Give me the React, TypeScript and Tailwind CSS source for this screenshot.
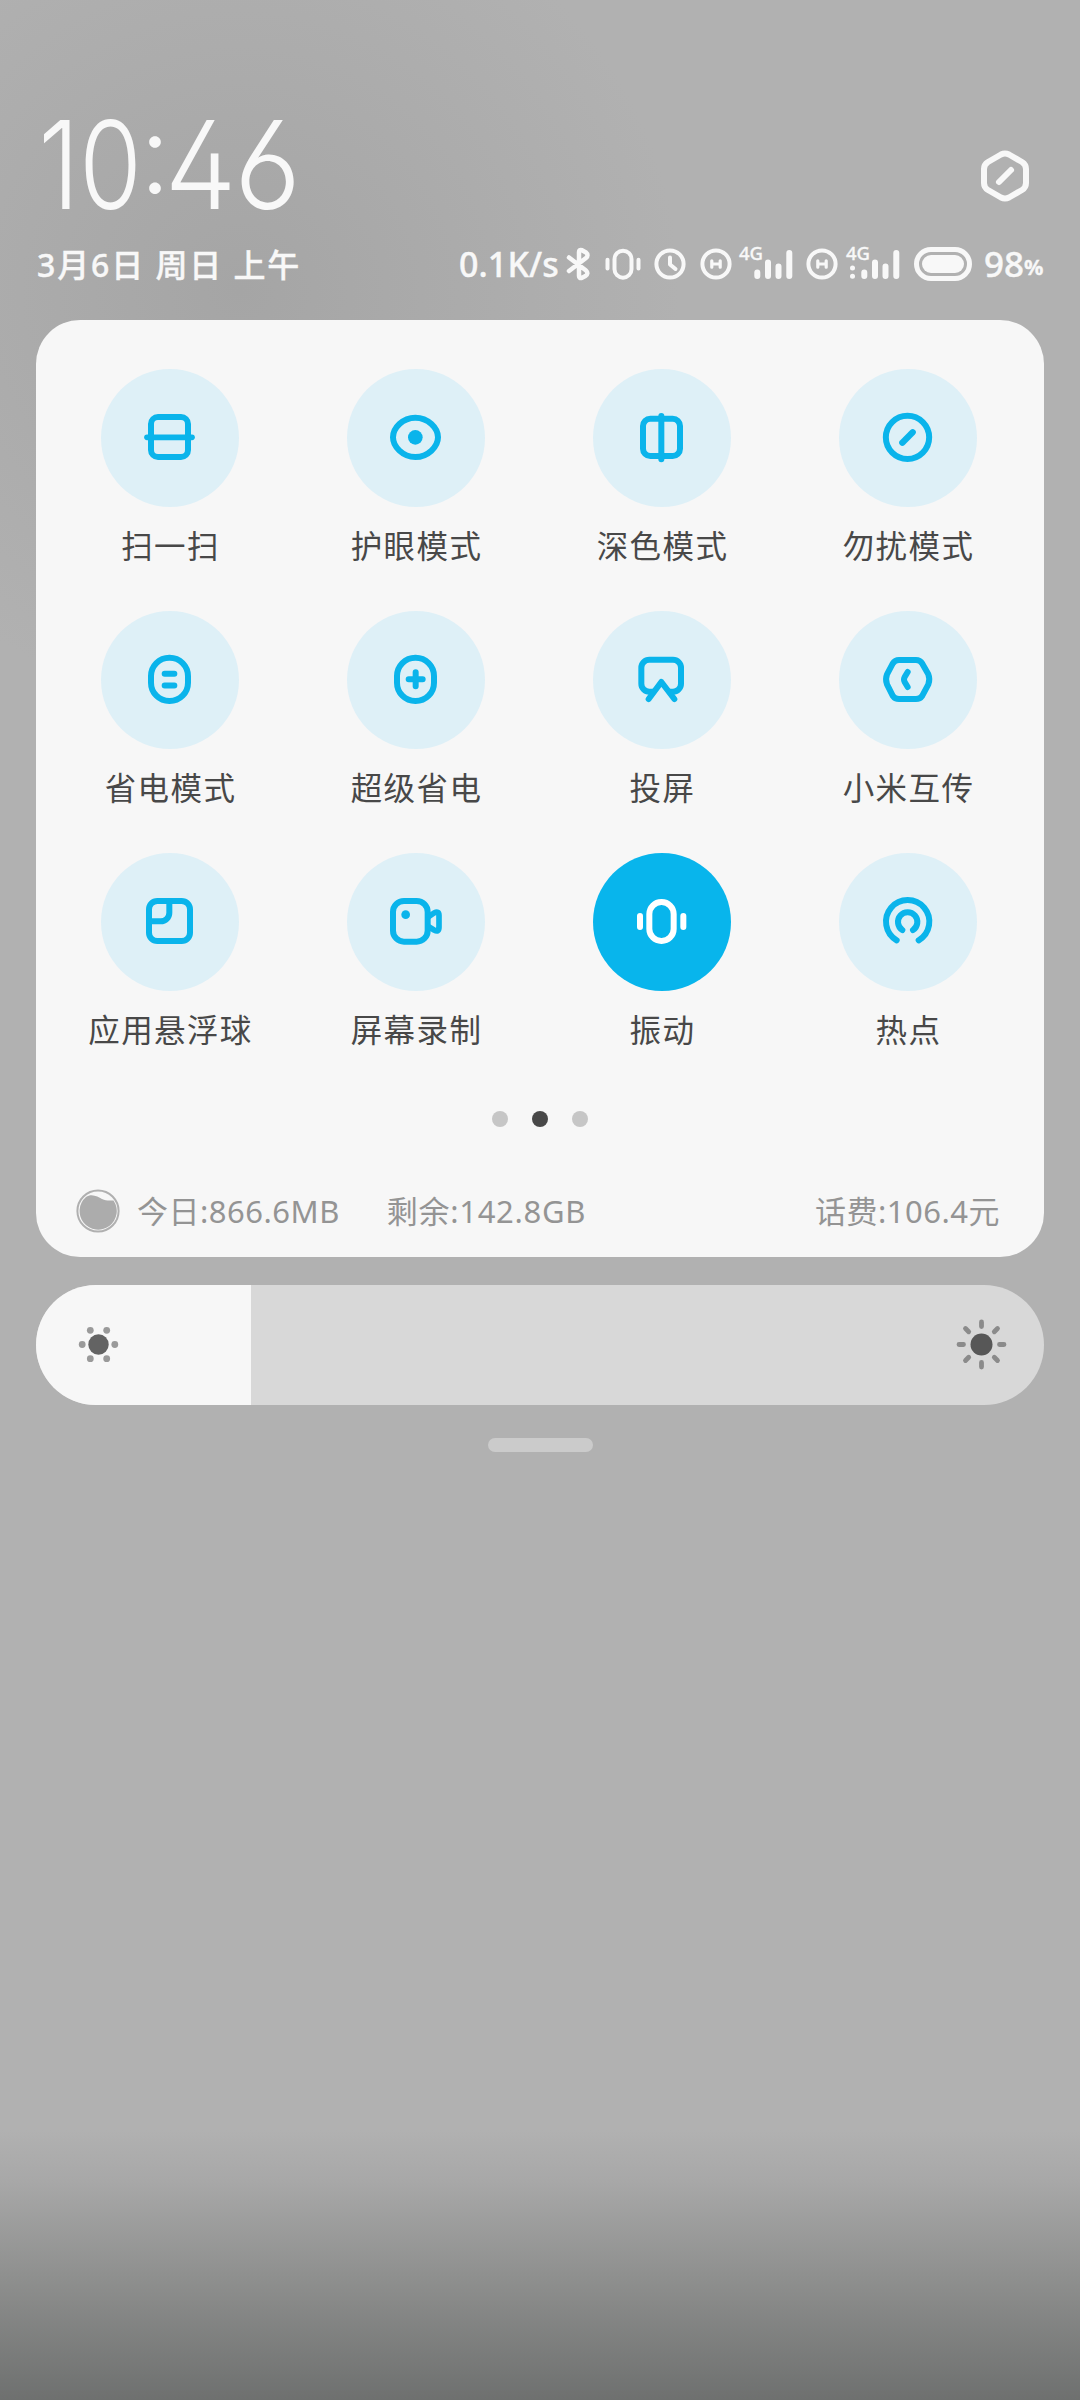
import type { ReactNode } from "react";

type Tile = { label: string; icon: ReactNode; active?: boolean };

const tiles: Tile[] = [
  {
    label: "扫一扫",
    icon: (
      <>
        <rect x="-57" y="-63" width="111" height="120" rx="21" />
        <path d="M-69 -2H66" strokeWidth="17" />
      </>
    ),
  },
  {
    label: "护眼模式",
    icon: (
      <>
        <path d="M-69 -2C-69 -30 -40 -61 -2 -61S66 -30 66 -2S36 57 -2 57S-69 26 -69 -2Z" />
        <circle cx="-2" cy="-2" r="22" fill="currentColor" stroke="none" />
      </>
    ),
  },
  {
    label: "深色模式",
    icon: (
      <>
        <rect x="-57" y="-58" width="111" height="112" rx="22" />
        <path d="M-2 -66V64" />
      </>
    ),
  },
  {
    label: "勿扰模式",
    icon: (
      <>
        <circle cx="-1.5" cy="-2" r="65" />
        <path d="M-17 14L14 -17" strokeWidth="19" />
      </>
    ),
  },
  {
    label: "省电模式",
    icon: (
      <>
        <rect x="-57" y="-67" width="111" height="130" rx="55" />
        <path d="M-16 -19H13M-16 16.5H13" />
      </>
    ),
  },
  {
    label: "超级省电",
    icon: (
      <>
        <rect x="-57" y="-67" width="111" height="130" rx="55" />
        <path d="M-22 -2H20M-1 -23V19" />
      </>
    ),
  },
  {
    label: "投屏",
    icon: (
      <>
        <path d="M-27 35H-38a24 24 0 0 1 -24 -24V-37a24 24 0 0 1 24 -24H33a24 24 0 0 1 24 24V11a24 24 0 0 1 -24 24H24" />
        <path d="M-40 57L-2 6L37 57" />
      </>
    ),
  },
  {
    label: "小米互传",
    icon: (
      <>
        <path d="M-27 -60H24Q36 -60 43 -49L61 -17Q67 -2 61 13L43 47Q36 57 24 57H-27Q-39 57 -46 47L-63 13Q-69 -2 -63 -17L-46 -49Q-39 -60 -27 -60Z" />
        <path d="M-1 -24L-10 -9Q-14 -2 -10 6L-1 21" />
      </>
    ),
  },
  {
    label: "应用悬浮球",
    icon: (
      <>
        <rect x="-63" y="-63" width="123" height="120" rx="25" />
        <path d="M-2 -63V-28a26 26 0 0 1 -26 26H-63" />
      </>
    ),
  },
  {
    label: "屏幕录制",
    icon: (
      <>
        <rect x="-69" y="-63" width="104" height="122" rx="33" />
        <circle cx="-31" cy="-22" r="13" fill="currentColor" stroke="none" />
        <path d="M38 -16L54 -27Q69 -35 69 -20V16Q69 32 54 24L38 14" strokeWidth="17" />
      </>
    ),
  },
  {
    label: "振动",
    active: true,
    icon: (
      <>
        <rect x="-38" y="-60" width="73" height="117" rx="36" />
        <path d="M-66 -18V15M64 -18V15" />
      </>
    ),
  },
  {
    label: "热点",
    icon: (
      <>
        <path d="M-34 55A65 65 0 1 1 32 55" />
        <path d="M-17 24A29 29 0 1 1 15 24" />
      </>
    ),
  },
];

function QuickTile({ label, icon, active }: Tile) {
  return (
    <div className="flex flex-col items-center">
      <div
        className={
          active
            ? "size-[138px] rounded-full bg-[#08b5ec] text-white"
            : "size-[138px] rounded-full bg-[#def0f7] text-[#0ab4eb]"
        }
      >
        <svg
          viewBox="-207 -207 414 414"
          className="size-full"
          fill="none"
          stroke="currentColor"
          strokeWidth="18"
          strokeLinecap="round"
          strokeLinejoin="round"
        >
          {icon}
        </svg>
      </div>
      <div className="mt-[16px] h-[46px] pl-[1px] text-[31.5px] leading-[46px] tracking-[1.4px] whitespace-nowrap text-[#484848]">
        {label}
      </div>
    </div>
  );
}

function HdBadge() {
  return (
    <svg viewBox="-16 -16 32 32" className="size-[32px]" fill="none" stroke="#f8f8f8" strokeWidth="4" strokeLinecap="round">
      <circle r="13.6" />
      <path d="M-4.2 -3.2V3.2M4.2 -3.2V3.2M-4.2 0H4.2" strokeWidth="3.2" />
    </svg>
  );
}

function Signal({ dots }: { dots?: boolean }) {
  return (
    <div className="relative h-[34px] w-[53px]">
      <span className="absolute -top-[3px] -left-[1px] text-[18.5px] leading-[17px] font-medium [-webkit-text-stroke:0.3px]">4G</span>
      <svg viewBox="0 0 53 34" className="size-full" fill="none" stroke="#f8f8f8" strokeWidth="6" strokeLinecap="round">
        <path d="M17.3 25.5V29M28 15.5V29M38.5 19.5V29M49.3 6V29" />
        {dots && <path d="M5.5 20.9h.01M5.5 29.3h.01" strokeWidth="5" />}
      </svg>
    </div>
  );
}

function StatusIcons() {
  return (
    <div className="flex h-[34px] items-center text-[#f8f8f8]">
      <span className="w-[107px] text-[34px] leading-[34px] font-medium tracking-[0.1px] whitespace-nowrap [-webkit-text-stroke:0.4px]">
        0.1K/s
      </span>
      <svg viewBox="0 0 26 34" className="h-[34px] w-[26px]" fill="none" stroke="#f8f8f8" strokeWidth="4.5" strokeLinecap="round" strokeLinejoin="round">
        <path d="M3 10.5L20 23.5Q23 26.500 19.500 29L16 30.800Q13 31.800 13 29V5Q13 2.200 16 3.200L20 5.500Q23 8 20 11L3 24" />
      </svg>
      <svg viewBox="0 0 38 34" className="ml-[12px] h-[34px] w-[38px]" fill="none" stroke="#f8f8f8" strokeWidth="4" strokeLinecap="round">
        <rect x="10.500" y="3.700" width="17" height="27" rx="8.500" />
        <path d="M3.500 12.700V21.500M34.500 12.700V21.500" />
      </svg>
      <svg viewBox="-16 -16 32 32" className="ml-[12px] size-[32px]" fill="none" stroke="#f8f8f8" strokeWidth="4" strokeLinecap="round" strokeLinejoin="round">
        <circle r="13.600" />
        <path d="M0 -6.500V0.500L5.500 5" />
      </svg>
      <div className="ml-[14px] flex">
        <HdBadge />
      </div>
      <div className="ml-[8px]">
        <Signal />
      </div>
      <div className="ml-[13px] flex">
        <HdBadge />
      </div>
      <div className="ml-[9px]">
        <Signal dots />
      </div>
      <div className="ml-[14px] flex h-[34px] w-[58px] items-center justify-center rounded-full border-[5px] border-[#f8f8f8]">
        <div className="h-[18px] w-[42px] rounded-full bg-[#f8f8f8]" />
      </div>
      <span className="ml-[12px] text-[35px] leading-[34px] font-medium [-webkit-text-stroke:0.4px]">98</span>
      <span className="mt-[6px] w-[20px] text-[21.5px] leading-[34px] font-bold [-webkit-text-stroke:0.3px]">%</span>
    </div>
  );
}

function Clock() {
  return (
    <div
      className="flex pl-[2px] text-[122px] leading-[134px] font-light"
      style={{ fontFamily: "Inter, sans-serif", fontFeatureSettings: "'cv03','ss01'" }}
    >
      <span className="flex w-[42px] scale-x-[0.86] justify-center">1</span>
      <span className="flex w-[61px] scale-x-[0.83] justify-center">0</span>
      <span className="flex w-[28px] -translate-y-[12px] scale-90 justify-center">:</span>
      <span className="flex w-[63px] scale-x-[0.94] justify-center">4</span>
      <span className="flex w-[71px] scale-x-[0.95] justify-center">6</span>
    </div>
  );
}

export default function App() {
  return (
    <div
      className="flex h-[2400px] w-[1080px] flex-col overflow-hidden bg-[#b1b1b1] bg-[linear-gradient(to_bottom,transparent_2130px,#a8a8a8_2180px,#8f908f_2275px,#6e706f_2400px),radial-gradient(ellipse_440px_420px_at_240px_290px,#a5a5a5,transparent)]"
      style={{ fontFamily: "'Noto Sans','Noto Sans CJK SC',sans-serif" }}
    >
      <header className="flex h-[320px] flex-col px-[36px] text-[#f8f8f8]">
        <div className="mt-[98px] flex h-[134px] items-center justify-between">
          <Clock />
          <svg viewBox="-26 -26 52 52" className="mt-[21px] mr-[13px] size-[52px]" fill="none" stroke="#f8f8f8" strokeWidth="6" strokeLinecap="round" strokeLinejoin="round">
            <path d="M-4 -21.500Q0 -23.500 4 -21.500L17 -14Q21 -11.500 21 -7V7Q21 11.500 17 14L4 21.500Q0 23.500 -4 21.500L-17 14Q-21 11.500 -21 7V-7Q-21 -11.500 -17 -14Z" />
            <path d="M-6 6L6 -6" />
          </svg>
        </div>
        <div className="mt-[14px] flex h-[36px] items-center justify-between">
          <div className="mt-[2px] pl-[1px] text-[32px] leading-[36px] font-medium tracking-[1.900px] whitespace-nowrap [-webkit-text-stroke:0.4px]">
            3月6日 周日 上午
          </div>
          <StatusIcons />
        </div>
      </header>

      <main className="mx-[36px] flex h-[937px] flex-col rounded-[44px] bg-[#f7f7f7]">
        <div className="grid auto-rows-[242px] grid-cols-[repeat(4,246px)] pt-[49px] pl-[11px]">
          {tiles.map((t) => (
            <QuickTile key={t.label} {...t} />
          ))}
        </div>
        <div className="mt-[16px] flex justify-center gap-[24px]">
          <span className="size-[16px] rounded-full bg-[#c6c6c6]" />
          <span className="size-[16px] rounded-full bg-[#484848]" />
          <span className="size-[16px] rounded-full bg-[#c6c6c6]" />
        </div>
        <div className="mt-[62px] flex h-[44px] items-center pr-[44px] pl-[40px] text-[31px] leading-[44px] tracking-[0.500px] whitespace-nowrap text-[#949494]">
          <svg viewBox="-22 -22 44 44" className="size-[44px]">
            <circle r="20.600" fill="none" stroke="#b0b0b0" strokeWidth="2" />
            <path d="M-12 -14C-6 -18 0 -14 4 -12S11 -10.500 15.500 -10.500A18.600 18.600 0 1 1 -12 -14Z" fill="#acacac" />
          </svg>
          <span className="ml-[17px]">今日:866.6MB</span>
          <span className="ml-[47px] tracking-[0.700px]">剩余:142.8GB</span>
          <span className="ml-auto">话费:106.4元</span>
        </div>
      </main>

      <div className="mx-[36px] mt-[28px] flex h-[120px] shrink-0 overflow-hidden rounded-full bg-[#d8d8d8]">
        <div className="flex w-[215px] items-center bg-[#f7f7f7] pb-[1px] pl-[41px]">
          <svg viewBox="-21.500 -21.500 43 43" className="size-[43px]" fill="#9a9a9a">
            <circle r="10.200" fill="#636363" />
            <circle cx="-16.300" r="3.400" />
            <circle cx="16.300" r="3.400" />
            <circle cx="-8.200" cy="-14.200" r="3.400" />
            <circle cx="8.200" cy="-14.200" r="3.400" />
            <circle cx="-8.200" cy="14.200" r="3.400" />
            <circle cx="8.200" cy="14.200" r="3.400" />
          </svg>
        </div>
        <div className="flex flex-1 items-center justify-end pr-[36px] pb-[1px]">
          <svg viewBox="-26.500 -26.500 53 53" className="size-[53px]" stroke="#8b8b8b" strokeWidth="4.800" strokeLinecap="round">
            <circle r="11" fill="#575757" stroke="none" />
            <path d="M0 -22.500V-18M0 22.500V18M-22.500 0H-18M22.500 0H18M-16 -16L-12.800 -12.800M16 -16L12.800 -12.800M-16 16L-12.800 12.800M16 16L12.800 12.800" />
          </svg>
        </div>
      </div>

      <div className="mx-auto mt-[33px] h-[14px] w-[105px] shrink-0 rounded-full bg-[#cbcbcb]" />
    </div>
  );
}
